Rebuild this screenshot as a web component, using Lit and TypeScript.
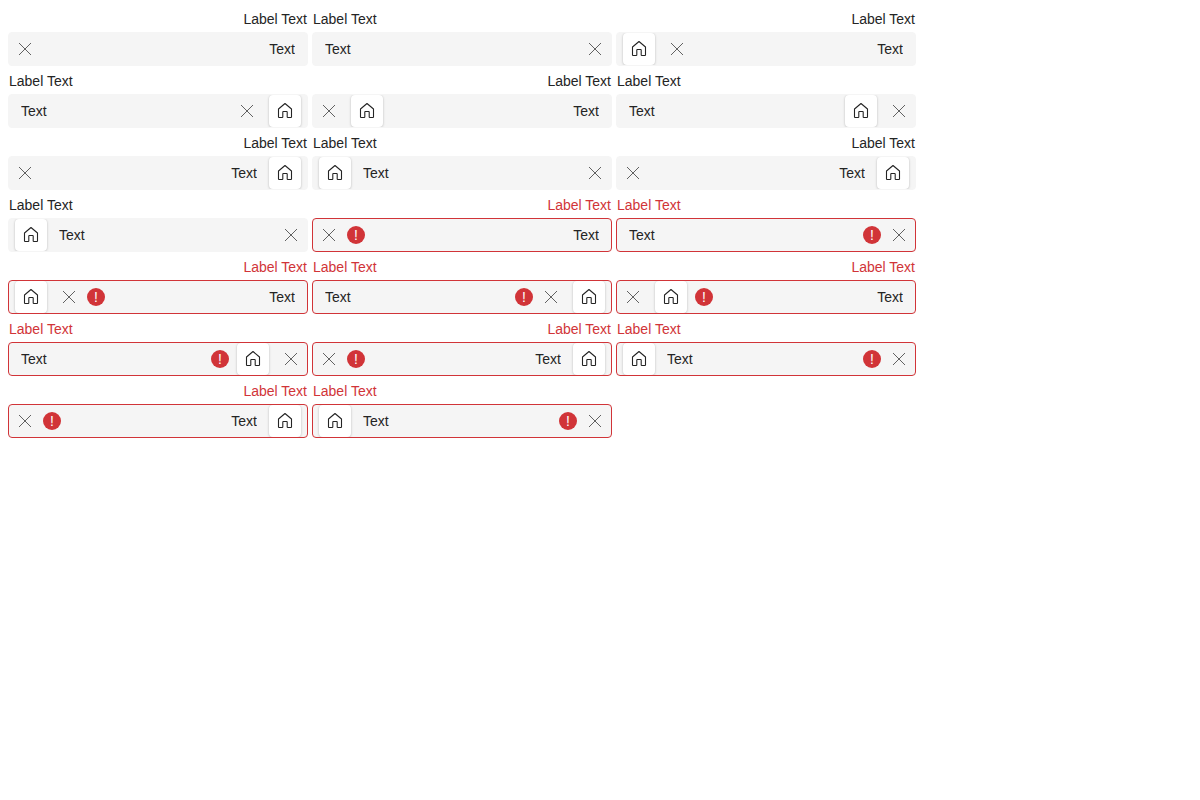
import { LitElement, html, css, nothing } from "lit";
import { customElement, property, state } from "lit/decorators.js";
import { classMap } from "lit/directives/class-map.js";

type Part = "text" | "error" | "clear" | "home";
interface FieldSpec {
  dir: "ltr" | "rtl";
  parts: Part[];
}

const LAYOUTS: Part[][] = [
  ["text", "clear"],
  ["text", "clear", "home"],
  ["text", "home", "clear"],
  ["home", "text", "clear"],
  ["home", "text", "clear"],
  ["text", "error", "clear"],
  ["text", "error", "clear", "home"],
  ["text", "error", "home", "clear"],
  ["home", "text", "error", "clear"],
  ["home", "text", "error", "clear"],
];

const FIELDS: FieldSpec[] = LAYOUTS.flatMap((parts) => [
  { dir: "rtl" as const, parts },
  { dir: "ltr" as const, parts },
]);

const homeIcon = html`<svg width="20" height="20" viewBox="0 0 20 20" fill="none" stroke="currentColor" stroke-width="1.1" stroke-linejoin="round" aria-hidden="true">
  <path d="M10 2.5 L16.5 8 V15.9 Q16.5 16.5 15.9 16.5 H12.9 Q12.2 16.5 12.2 15.9 V11.1 Q12.2 10.5 11.6 10.5 H8.4 Q7.8 10.5 7.8 11.1 V15.9 Q7.8 16.5 7.1 16.5 H4.1 Q3.5 16.5 3.5 15.9 V8 Z"/>
</svg>`;

const clearIcon = html`<svg width="12" height="12" viewBox="0 0 12 12" stroke="currentColor" fill="none" aria-hidden="true">
  <path d="M0 0 L12 12 M12 0 L0 12"/>
</svg>`;

@customElement("text-field")
export class TextField extends LitElement {
  @property({ attribute: false }) parts: Part[] = ["text"];
  @property() direction: "ltr" | "rtl" = "ltr";
  @state() private value = "Text";

  static styles = css`
    :host {
      display: block;
      font: 14px/20px "Liberation Sans", Arial, sans-serif;
      color: #242424;
    }
    .label {
      display: block;
      height: 24px;
      padding: 0 1px;
      line-height: 22px;
      box-sizing: border-box;
    }
    .box {
      display: flex;
      align-items: center;
      height: 34px;
      box-sizing: border-box;
      border: 1px solid #f5f5f5;
      border-radius: 4px;
      background: #f5f5f5;
      overflow: hidden;
    }
    .invalid .label {
      color: #d13438;
    }
    .invalid .box {
      border-color: #d13438;
    }
    .input {
      flex: 1;
      width: 0;
      min-width: 0;
      height: 32px;
      box-sizing: border-box;
      margin: 0;
      padding: 0 12px;
      border: 0;
      outline: 0;
      background: transparent;
      color: inherit;
      font: inherit;
    }
    .home + .input {
      padding-inline-start: 6px;
    }
    .home,
    .clear {
      display: flex;
      flex: none;
      align-items: center;
      justify-content: center;
      width: 32px;
      height: 32px;
      padding: 0;
      border: 0;
      background: transparent;
    }
    .clear {
      margin: 0;
      color: #616161;
    }
    .home {
      margin: 0 6px;
      border-radius: 4px;
      background: #fff;
      color: #242424;
      box-shadow: 0 0 2px rgba(0, 0, 0, 0.12), 0 1px 3px rgba(0, 0, 0, 0.14);
    }
    .error {
      flex: none;
      width: 18px;
      height: 18px;
      margin: 0 2px;
      border-radius: 50%;
      background: #d13438;
      color: #fff;
      line-height: 18px;
      text-align: center;
    }
  `;

  private part(name: Part) {
    switch (name) {
      case "text":
        return html`<input id="field" class="input" type="text" .value=${this.value}
          @input=${(e: Event) => (this.value = (e.target as HTMLInputElement).value)} />`;
      case "clear":
        return html`<button class="clear" type="button" aria-label="Clear" @click=${() => (this.value = "")}>${clearIcon}</button>`;
      case "home":
        return html`<button class="home" type="button" aria-label="Home">${homeIcon}</button>`;
      case "error":
        return html`<span class="error" role="img" aria-label="Error">!</span>`;
      default:
        return nothing;
    }
  }

  render() {
    return html`<div class=${classMap({ wrap: true, invalid: this.parts.includes("error") })} dir=${this.direction}>
      <label class="label" for="field">Label Text</label>
      <div class="box">${this.parts.map((p) => this.part(p))}</div>
    </div>`;
  }
}

@customElement("app-root")
export class AppRoot extends LitElement {
  static styles = css`
    :host {
      display: block;
      padding: 8px;
    }
    .fields {
      display: flex;
      flex-wrap: wrap;
      gap: 4px;
    }
    .field {
      flex: 0 1 300px;
      min-width: 0;
    }
  `;

  render() {
    return html`<main class="fields">
      ${FIELDS.map((f) => html`<text-field class="field" .parts=${f.parts} .direction=${f.dir}></text-field>`)}
    </main>`;
  }
}
